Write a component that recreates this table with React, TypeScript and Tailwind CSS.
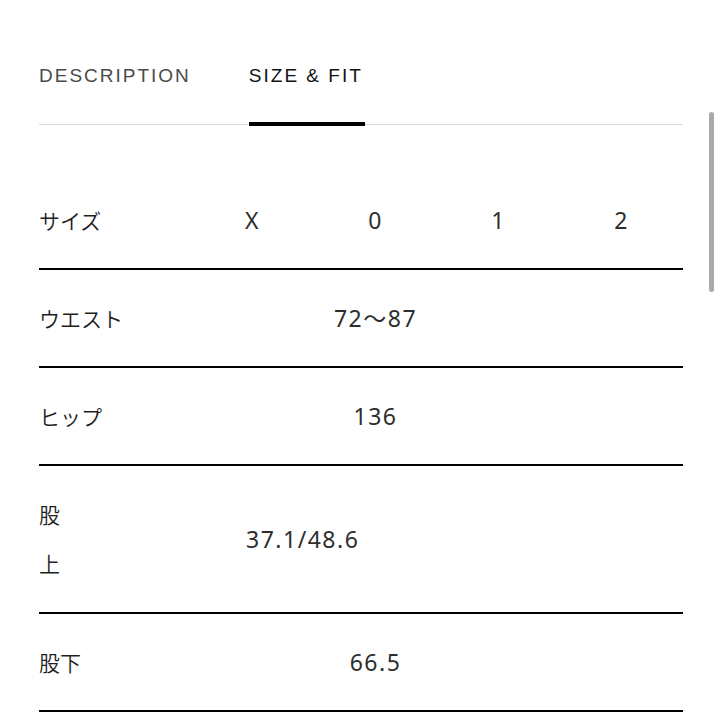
export default function App() {
  const rows = [
    { label: "ウエスト", value: "72〜87" },
    { label: "ヒップ", value: "136" },
  ];

  const rowCls =
    "grid grid-cols-[152px_repeat(4,1fr)] items-center border-b-2 border-black py-[24px] leading-[48px]";
  const num =
    "font-['Noto_Sans','Noto_Sans_CJK_JP',sans-serif] text-[23px] font-normal tracking-[1.5px] text-[#2e2e2e]";

  return (
    <div className="relative w-[722px] h-[722px] overflow-hidden bg-white text-[#222]">
      {/* scrollbar thumb */}
      <div className="absolute right-[8px] top-[112px] h-[180px] w-[5px] rounded-full bg-[#a9a9a9]" />

      <div className="px-[39px]">
        <div className="flex gap-[58px] border-b border-[#dcdcdc] pt-[66px] font-['Liberation_Sans',sans-serif] text-[19px] leading-none tracking-[2px]">
          <div className="pb-[39px] text-[#4a4a4a]">DESCRIPTION</div>
          <div className="relative pb-[39px] text-[#111]">
            SIZE &amp; FIT
            <span className="absolute left-0 right-[-2px] bottom-[-2px] h-[4px] bg-black" />
          </div>
        </div>

        <div className="mt-[47px] font-['Noto_Sans_CJK_JP',sans-serif] text-[21px] font-[350] text-[#1e1e1e]">
          <div className={rowCls}>
            <div>サイズ</div>
            <div className={`text-center ${num}`}>X</div>
            <div className={`text-center ${num}`}>0</div>
            <div className={`text-center ${num}`}>1</div>
            <div className={`text-center ${num}`}>2</div>
          </div>

          {rows.map((r) => (
            <div key={r.label} className={rowCls}>
              <div>{r.label}</div>
              <div />
              <div className={`text-center ${num}`}>{r.value}</div>
              <div />
              <div />
            </div>
          ))}

          <div className="grid grid-cols-[152px_repeat(4,1fr)] items-center border-b-2 border-black py-[24px] leading-[49px]">
            <div>
              <div>股</div>
              <div>上</div>
            </div>
            <div className={`col-span-2 pl-[55px] ${num}`}>37.1/48.6</div>
            <div />
            <div />
          </div>

          <div className={rowCls}>
            <div>股下</div>
            <div />
            <div className={`text-center ${num}`}>66.5</div>
            <div />
            <div />
          </div>
        </div>
      </div>
    </div>
  );
}
